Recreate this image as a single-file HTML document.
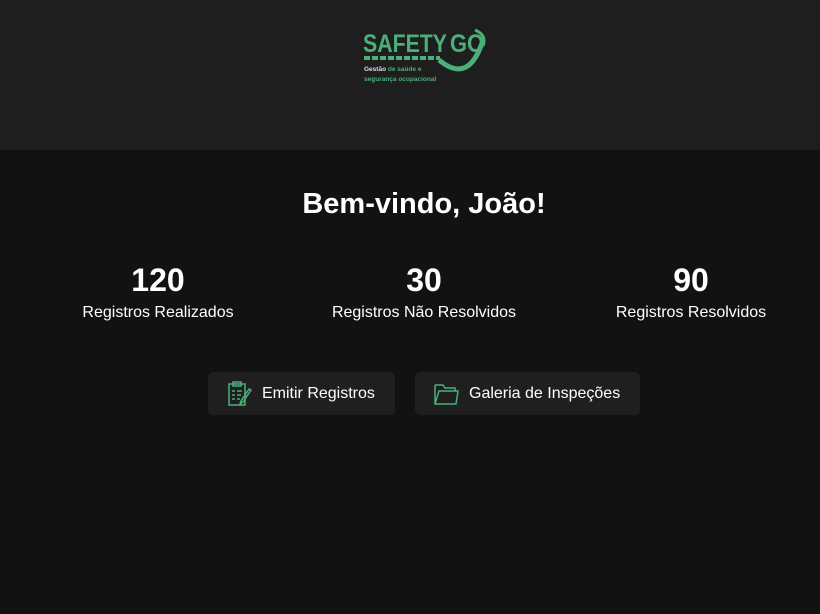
<!DOCTYPE html>
<html><head><meta charset="utf-8"><style>
body{margin:0;width:820px;height:614px;background:#121212;font-family:"Liberation Sans",sans-serif;color:#fff;overflow:hidden}
.hdr{height:150px;background:#1e1e1e;position:relative}
.t{position:absolute;left:14px;width:820px;text-align:center}
.st{position:absolute;text-align:center;width:240px}
.st b{display:block;font-size:32px;line-height:36px;margin-bottom:6px}
.st span{font-size:16px}
.btn{position:absolute;top:372px;height:43px;background:#1f1f1f;border-radius:5px;font-size:16px;line-height:43px}
</style></head><body>
<div class="hdr">
<svg width="140" height="70" style="position:absolute;left:355px;top:20px">
<text x="8" y="32" font-family="Liberation Sans" font-weight="900" font-size="25" fill="#4caf7a" textLength="84" lengthAdjust="spacingAndGlyphs">SAFETY</text>
<text x="95" y="32" font-family="Liberation Sans" font-weight="900" font-size="25" fill="#4caf7a" textLength="34" lengthAdjust="spacingAndGlyphs">GO</text>
<path d="M9 38h76" stroke="#4caf7a" stroke-width="4" stroke-dasharray="6 2"/>
<path d="M84 40 q30 25 44-20" stroke="#4caf7a" stroke-width="5" fill="none"/>
<path d="M120 10 q12 5 8 16" stroke="#4caf7a" stroke-width="3" fill="none"/>
<text x="9" y="51" font-size="6.5" font-weight="bold" fill="#ddd">Gestão <tspan fill="#4caf7a">de saúde e</tspan></text>
<text x="9" y="61" font-size="6.5" font-weight="bold" fill="#4caf7a">segurança ocupacional</text>
</svg>
</div>
<div class="t" style="top:188px;font-size:29px;font-weight:bold">Bem-vindo, João!</div>
<div class="st" style="left:38px;top:262px"><b>120</b><span>Registros Realizados</span></div>
<div class="st" style="left:304px;top:262px"><b>30</b><span>Registros Não Resolvidos</span></div>
<div class="st" style="left:571px;top:262px"><b>90</b><span>Registros Resolvidos</span></div>
<div class="btn" style="left:208px;width:187px">
<svg width="26" height="26" style="position:absolute;left:19px;top:9px" fill="none" stroke="#4caf7a" stroke-width="1.5"><rect x="2" y="3" width="16" height="21"/><rect x="6" y="1" width="8" height="4"/><path d="M5 10h3M10 10h5M5 14h3M10 14h4M5 18h3M10 18h3M22 8l-8 12-1 3 3-2 8-12z"/></svg>
<span style="position:absolute;left:54px">Emitir Registros</span></div>
<div class="btn" style="left:415px;width:225px">
<svg width="26" height="24" style="position:absolute;left:19px;top:10px" fill="none" stroke="#4caf7a" stroke-width="1.5"><path d="M1 3h8l2 3h10v3M1 3v19h21l2-13H5L1 22"/></svg>
<span style="position:absolute;left:54px">Galeria de Inspeções</span></div>
</body></html>
